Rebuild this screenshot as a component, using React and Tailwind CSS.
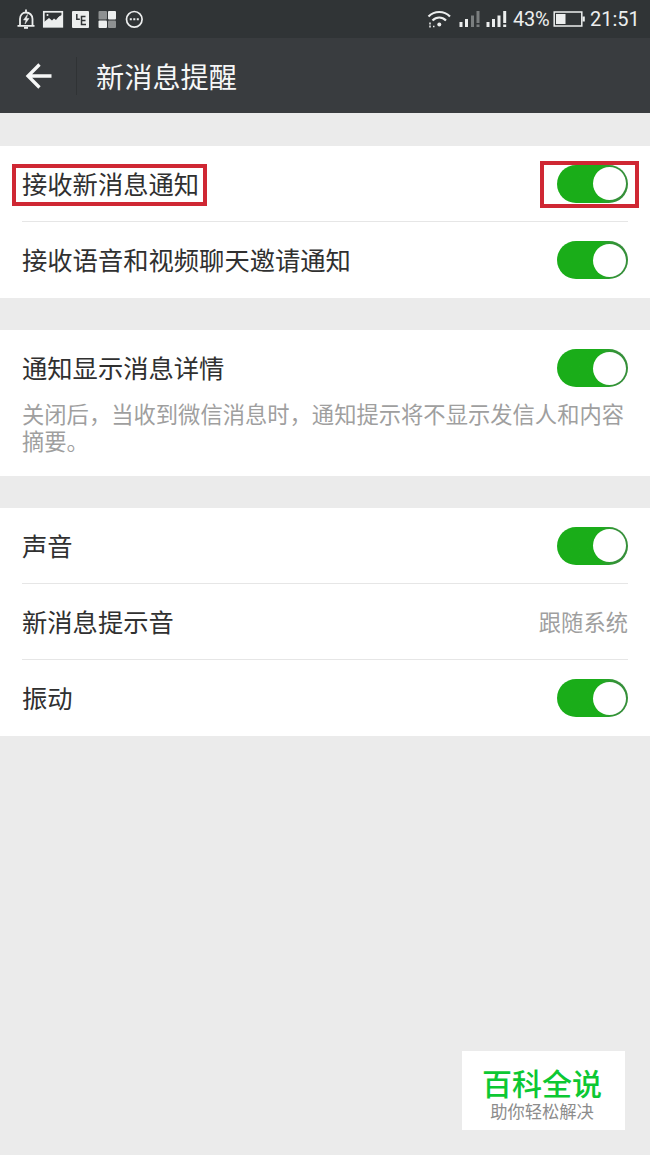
export default function App() {
  return (
    <div className="relative flex h-[1155px] w-[650px] flex-col overflow-hidden bg-[#ebebeb] font-['Noto_Sans_CJK_SC','Noto_Sans',sans-serif]">
      <StatusBar />
      <Header title="新消息提醒" />

      <main className="flex flex-col gap-8 pt-[33px]">
        <Group>
          <Row label="接收新消息通知" divider highlighted>
            <Toggle />
          </Row>
          <Row label="接收语音和视频聊天邀请通知">
            <Toggle />
          </Row>
        </Group>

        <Group>
          <Row label="通知显示消息详情">
            <Toggle />
          </Row>
          <p className="-mt-1.5 h-19 pl-[22px] text-[22.3px] leading-[26.5px] whitespace-nowrap text-[#9f9f9f]">
            关闭后，当收到微信消息时，通知提示将不显示发信人和内容
            <br />
            摘要。
          </p>
        </Group>

        <Group>
          <Row label="声音" divider>
            <Toggle />
          </Row>
          <Row label="新消息提示音" divider>
            <span className="text-[22.3px] text-[#9f9f9f]">跟随系统</span>
          </Row>
          <Row label="振动">
            <Toggle />
          </Row>
        </Group>
      </main>

      <div className="absolute top-[1051px] left-[462px] flex h-[79px] w-[163px] flex-col items-center bg-white pt-[13px] pr-[3px]">
        <div className="text-[30px] leading-9 font-medium text-[#0cc833]">百科全说</div>
        <div className="mt-px text-[17.3px] leading-5 text-[#8c8c8c]">助你轻松解决</div>
      </div>
    </div>
  );
}

function StatusBar() {
  return (
    <div className="flex h-[38px] shrink-0 items-center justify-between bg-[#303436] pr-[11px] pl-[17px] text-[#eceeee]">
      <svg width="128" height="24" viewBox="17 7 128 24" fill="none" stroke="currentColor">
        <path d="M17.500 25.800h17M20 25v-6c0-4 2.500-6.500 6-6.500s6.500 2.500 6.500 6.500v6M26 12v-2.500" strokeWidth="1.800" />
        <path d="M24 27.800h4" strokeWidth="2" />
        <path d="M27.500 14.500l-4 5.500h2.500l-1 4 4-5.500h-2.500z" fill="currentColor" strokeWidth=".5" />
        <rect x="43.800" y="11.800" width="18.500" height="15" strokeWidth="1.700" />
        <path d="M44 22l5-4 3 2.500 2-2 2 1.500 3-4 3-1v12H44z" fill="currentColor" stroke="none" />
        <path d="M45 18V13h16v2l-4 3-2-1.500-3 3-3-3z" fill="#303436" stroke="none" />
        <circle cx="47.500" cy="15" r="1" fill="currentColor" stroke="none" />
        <rect x="72" y="11" width="17" height="17" rx="1" fill="currentColor" stroke="none" />
        <path d="M76.800 14v5.300h3M85.500 16.500h-4v8H86M81.500 20.500h4" stroke="#303436" strokeWidth="1.500" />
        <g fill="currentColor" stroke="none">
          <rect x="98.500" y="11" width="8.500" height="8.500" rx="1" opacity=".5" />
          <rect x="108" y="11" width="8" height="8.500" rx="1" />
          <rect x="98.500" y="20.500" width="8.500" height="7.500" rx="1" />
          <rect x="108" y="20.500" width="8" height="7.500" rx="1" opacity=".5" />
        </g>
        <circle cx="134.300" cy="19.300" r="7.800" strokeWidth="1.700" />
        <path d="M129.800 19.300h2m1.500 0h2m1.500 0h2" strokeWidth="2" />
      </svg>

      <div className="flex items-center">
        <svg width="82" height="24" viewBox="426 7 82 24" fill="none" stroke="currentColor">
          <path d="M428.500 16.500c6-6 15.500-6 21.500 0M432.500 20.500c4-4 9.500-4 13.500 0" strokeWidth="2.200" />
          <circle cx="439.300" cy="24.500" r="2" fill="currentColor" stroke="none" />
          <path d="M430 22.500v2M430 25.500v2M433 26.500h1.500" strokeWidth="1.500" />
          <path d="M461 22v5M466.500 19v8" strokeWidth="3" />
          <path d="M472.500 15.500V27M478 11v12m0 1.500V27" strokeWidth="3" opacity=".4" />
          <path d="M488 22v5M493.500 19v8M499 15.500V27" strokeWidth="3" />
          <path d="M504.700 11v12m0 1.500V27" strokeWidth="3" />
        </svg>
        <span className="ml-[5px] w-[38px] font-[Roboto] text-[20px] leading-6 tracking-[-0.3px]">43%</span>
        <svg className="ml-[2px]" width="32" height="24" viewBox="553 7 32 24" fill="none" stroke="currentColor">
          <rect x="554.200" y="12" width="27.600" height="14" strokeWidth="1.500" />
          <path d="M556 14h9.500v10H556zM582.500 16.500h2.300v5h-2.300z" fill="currentColor" stroke="none" />
        </svg>
        <span className="ml-[5px] w-[49px] font-[Roboto] text-[20px] leading-6 whitespace-nowrap">21:51</span>
      </div>
    </div>
  );
}

function Header({ title }) {
  return (
    <header className="flex h-[75px] shrink-0 items-center bg-[#393c3f] pl-[25px] text-[#f6f7f7]">
      <svg width="28" height="28" viewBox="0 0 28 28" fill="none" stroke="currentColor" strokeWidth="3.300">
        <path d="M26.500 14H3M14.500 2.500L3 14l11.500 11.500" />
      </svg>
      <div className="ml-[23px] h-[38px] w-px bg-[#303335]" />
      <h1 className="ml-[19px] text-[28.2px] leading-10">{title}</h1>
    </header>
  );
}

function Group({ children }) {
  return <section className="bg-white">{children}</section>;
}

function Row({ label, divider, highlighted, children }) {
  return (
    <div className={`mx-[22px] flex h-19 items-center justify-between ${divider ? "border-b border-[#e6e6e6]" : ""}`}>
      <div className="relative">
        <span className="relative -top-px text-[25.3px] leading-9 whitespace-nowrap text-[#303030]">{label}</span>
        {highlighted && <div className="absolute top-[-2px] left-[-10px] h-[42px] w-[195px] border-4 border-[#cf2733]" />}
      </div>
      <div className="relative flex items-center">
        {children}
        {highlighted && <div className="absolute top-[-4px] left-[-17px] h-[47px] w-[99px] border-4 border-[#cf2733]" />}
      </div>
    </div>
  );
}

function Toggle() {
  return (
    <div className="flex h-[38px] w-[71px] items-center justify-end rounded-full bg-linear-to-r from-[#1aad19] from-60% to-[#36903a] to-85% pr-[2px]">
      <div className="size-[33px] rounded-full bg-white" />
    </div>
  );
}
